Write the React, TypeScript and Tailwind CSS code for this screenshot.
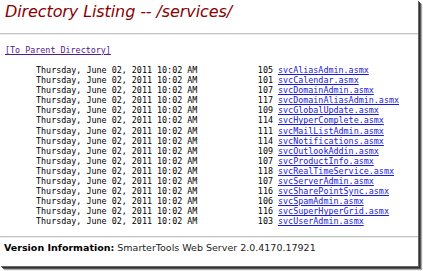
import React from "react";

const files: [string, string][] = [
  ["105", "svcAliasAdmin.asmx"],
  ["101", "svcCalendar.asmx"],
  ["107", "svcDomainAdmin.asmx"],
  ["117", "svcDomainAliasAdmin.asmx"],
  ["109", "svcGlobalUpdate.asmx"],
  ["114", "svcHyperComplete.asmx"],
  ["111", "svcMailListAdmin.asmx"],
  ["114", "svcNotifications.asmx"],
  ["109", "svcOutlookAddin.asmx"],
  ["107", "svcProductInfo.asmx"],
  ["118", "svcRealTimeService.asmx"],
  ["107", "svcServerAdmin.asmx"],
  ["116", "svcSharePointSync.asmx"],
  ["106", "svcSpamAdmin.asmx"],
  ["116", "svcSuperHyperGrid.asmx"],
  ["103", "svcUserAdmin.asmx"],
];

const mono = "font-['DejaVu_Sans_Mono','Liberation_Mono',monospace]";

export default function App() {
  return (
    <div className="w-[423px] h-[271px] bg-white overflow-hidden">
      <div className="w-[418px] h-[266px] bg-white shadow-[1px_1px_0_#666,2px_2px_0_#333,3px_3px_0_#555,4px_4px_1px_#aaa] flex flex-col">
        <h1 className="pl-[5px] pt-[2px] h-[33px] text-[16px] leading-[20px] italic text-[#8b0000] font-['DejaVu_Sans','Verdana',sans-serif] tracking-[-0.1px]">
          Directory Listing -- /services/
        </h1>
        <div className="h-[2px] border-t border-[#c4c4c4] border-b-[#ececec] border-b" />
        <div className={`pl-[5px] pt-[10px] text-[8.4px] leading-[10px] ${mono}`}>
          <a className="text-[#551a8b] underline">[To Parent Directory]</a>
        </div>
        <div className={`pt-[10px] flex flex-col text-[8.4px] leading-[10.1px] text-black ${mono}`}>
          {files.map(([size, name]) => (
            <div key={name} className="flex">
              <span className="ml-[36px] w-[190px]">Thursday, June 02, 2011 10:02 AM</span>
              <span className="w-[47px] text-right">{size}</span>
              <a className="ml-[5px] text-[#1a1adc] underline">{name}</a>
            </div>
          ))}
        </div>
        <div className="mt-[9px] h-[2px] border-t border-[#c4c4c4] border-b-[#ececec] border-b" />
        <div className="pl-[4px] pt-[4px] text-[9.5px] leading-[12px] text-[#222] font-['DejaVu_Sans','Verdana',sans-serif]">
          <b className="text-black">Version Information:</b> SmarterTools Web Server 2.0.4170.17921
        </div>
      </div>
    </div>
  );
}
